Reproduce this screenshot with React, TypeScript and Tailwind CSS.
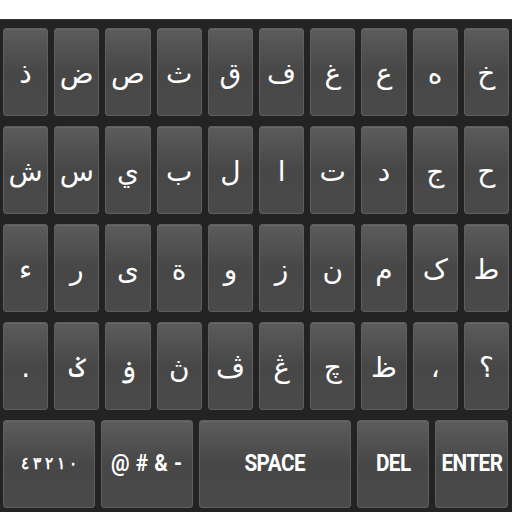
const rows: string[][] = [
  ["ذ", "ض", "ص", "ث", "ق", "ف", "غ", "ع", "ه", "خ"],
  ["ش", "س", "ي", "ب", "ل", "ا", "ت", "د", "ج", "ح"],
  ["ء", "ر", "ى", "ة", "و", "ز", "ن", "م", "ک", "ط"],
  [".", "ݢ", "ۏ", "ڽ", "ڤ", "ڠ", "چ", "ظ", "،", "؟"],
];

const keyClass =
  "flex items-center justify-center rounded-[3px] border border-[#5e5e5e] bg-gradient-to-b from-[#5c5c5c] via-[#474747] to-[#4a4a4a] shadow-[inset_0_1px_0_rgba(255,255,255,0.08)] text-white";

function Key({ label }: { label: string }) {
  return (
    <div className={keyClass + " h-[88px] text-[28px] font-['DejaVu_Sans',sans-serif]"} dir="rtl">
      <span className="pt-1">{label}</span>
    </div>
  );
}

function WideKey({ label, w, text = "text-[23px] tracking-tight" }: { label: string; w: string; text?: string }) {
  return (
    <div className={keyClass + " h-[88px] " + w}>
      <span className={"inline-block scale-x-[0.9] whitespace-pre font-bold font-['Roboto',sans-serif] " + text}>
        {label}
      </span>
    </div>
  );
}

export default function App() {
  return (
    <div className="flex h-[512px] w-[512px] flex-col bg-white">
      <div className="h-[19px] shrink-0 bg-white" />
      <div className="flex flex-1 flex-col gap-[10px] border-t border-[#363636] bg-[#232323] px-[3px] pt-[8px]">
        {rows.map((r, i) => (
          <div key={i} className="grid grid-cols-10 gap-[6px]">
            {r.map((c, j) => (
              <Key key={j} label={c} />
            ))}
          </div>
        ))}
        <div className="flex gap-[6px] pr-[1px]">
          <WideKey label="٠ ١ ٢ ٣ ٤" w="w-[92px]" text="text-[17px] tracking-normal" />
          <WideKey label="@ # & -" w="w-[92px]" text="text-[23px] tracking-wide" />
          <WideKey label="SPACE" w="w-[152px]" />
          <WideKey label="DEL" w="w-[72px]" />
          <WideKey label="ENTER" w="flex-1" />
        </div>
      </div>
    </div>
  );
}
